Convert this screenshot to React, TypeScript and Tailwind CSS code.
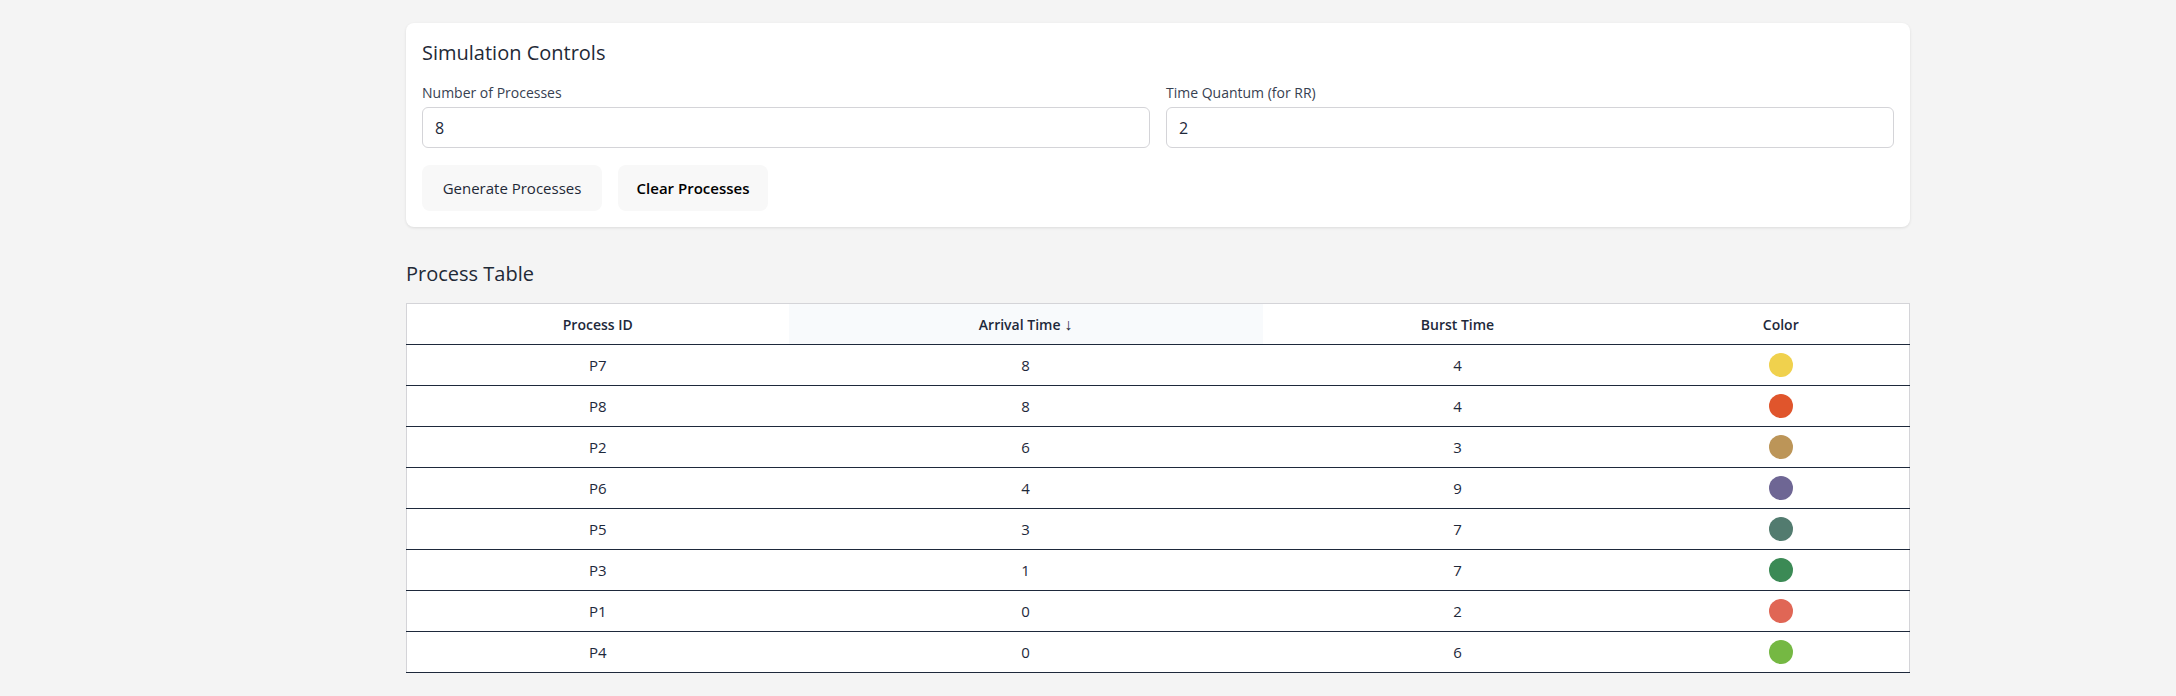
import { useState } from "react";

type Proc = { id: string; arrival: number; burst: number; color: string };

// already sorted by arrival time, descending
const PROCESSES: Proc[] = [
  { id: "P7", arrival: 8, burst: 4, color: "#f0d14d" },
  { id: "P8", arrival: 8, burst: 4, color: "#e0552c" },
  { id: "P2", arrival: 6, burst: 3, color: "#bc9558" },
  { id: "P6", arrival: 4, burst: 9, color: "#6e6694" },
  { id: "P5", arrival: 3, burst: 7, color: "#527b6f" },
  { id: "P3", arrival: 1, burst: 7, color: "#3b8a55" },
  { id: "P1", arrival: 0, burst: 2, color: "#e06655" },
  { id: "P4", arrival: 0, burst: 6, color: "#75b843" },
];

const FONT = "font-['Open_Sans','Noto_Sans',sans-serif]";

export default function App() {
  const [count, setCount] = useState("8");
  const [quantum, setQuantum] = useState("2");

  return (
    <div className={`min-h-screen bg-[#f4f4f4] pl-[406px] pt-[23px] text-[#1e293b] ${FONT}`}>
      <div className="w-[1504px]">
        <section className="rounded-lg bg-white p-4 shadow-[0_1px_3px_rgba(0,0,0,0.1)]">
          <h2 className="text-[20px] font-medium leading-7 text-[#1f2a37]">
            Simulation Controls
          </h2>

          <div className="mt-4 grid grid-cols-2 gap-4">
            <Field label="Number of Processes" value={count} onChange={setCount} />
            <Field label="Time Quantum (for RR)" value={quantum} onChange={setQuantum} />
          </div>

          <div className="mt-[17px] flex gap-4">
            <button
              type="button"
              className="h-[46px] w-[180px] rounded-lg bg-[#f8f8f8] text-[15px] font-medium text-[#1f2937]"
            >
              Generate Processes
            </button>
            <button
              type="button"
              className="h-[46px] w-[150px] rounded-lg bg-[#f8f8f8] text-[15px] font-semibold text-black"
            >
              Clear Processes
            </button>
          </div>
        </section>

        <h2 className="mb-[15px] mt-[33px] text-[20px] font-medium leading-7 text-[#1f2a37]">
          Process Table
        </h2>

        <table className="w-full table-fixed border-collapse border border-[#d4d4d8] bg-white">
          <colgroup>
            <col className="w-[382px]" />
            <col className="w-[474px]" />
            <col className="w-[390px]" />
            <col />
          </colgroup>
          <thead>
            <tr className="border-b border-[#1e293b]">
              <th className="h-[41px] text-[14px] font-semibold">Process ID</th>
              <th className="h-[41px] bg-[#f8fafc] text-[14px] font-semibold">
                Arrival Time <span className="text-[16px] font-normal">↓</span>
              </th>
              <th className="h-[41px] text-[14px] font-semibold">Burst Time</th>
              <th className="h-[41px] text-[14px] font-semibold">Color</th>
            </tr>
          </thead>
          <tbody>
            {PROCESSES.map((p) => (
              <tr key={p.id} className="border-b border-[#1e293b]">
                <td className="h-[41px] text-center text-[15px]">{p.id}</td>
                <td className="h-[41px] text-center text-[15px]">{p.arrival}</td>
                <td className="h-[41px] text-center text-[15px]">{p.burst}</td>
                <td className="h-[41px]">
                  <div className="mx-auto h-6 w-6 rounded-full" style={{ backgroundColor: p.color }} />
                </td>
              </tr>
            ))}
          </tbody>
        </table>
      </div>
    </div>
  );
}

function Field({
  label,
  value,
  onChange,
}: {
  label: string;
  value: string;
  onChange: (v: string) => void;
}) {
  return (
    <label className="block">
      <span className="mb-1 block text-[14px] font-medium leading-5 text-[#374151]">{label}</span>
      <input
        type="text"
        value={value}
        onChange={(e) => onChange(e.target.value)}
        className="h-[41px] w-full rounded-md border border-[#d4d4d8] px-3 text-[16px] text-[#1e293b] outline-none"
      />
    </label>
  );
}
